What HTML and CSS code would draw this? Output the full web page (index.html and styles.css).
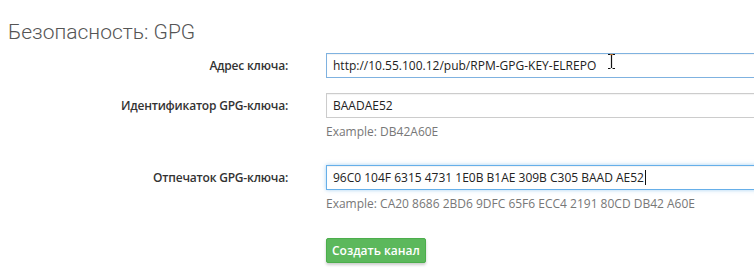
FILE: index.html
```html
<!DOCTYPE html>
<html lang="ru">
<head>
    <meta charset="UTF-8">
    <title>Безопасность: GPG</title>
    <link rel="stylesheet" href="styles.css">
</head>
<body>
    <h2 class="page-title">Безопасность: GPG</h2>

    <form class="gpg-form">
        <div class="form-row">
            <label class="form-label" for="key-url">Адрес ключа:</label>
            <div class="form-field">
                <input class="form-input is-active" id="key-url" type="text" value="http://10.55.100.12/pub/RPM-GPG-KEY-ELREPO">
            </div>
        </div>

        <div class="form-row">
            <label class="form-label" for="key-id">Идентификатор GPG-ключа:</label>
            <div class="form-field">
                <input class="form-input" id="key-id" type="text" value="BAADAE52">
                <span class="help-text">Example: DB42A60E</span>
            </div>
        </div>

        <div class="form-row">
            <label class="form-label" for="key-fp">Отпечаток GPG-ключа:</label>
            <div class="form-field">
                <div class="input-wrap">
                    <input class="form-input is-focused" id="key-fp" type="text" value="96C0 104F 6315 4731 1E0B B1AE 309B C305 BAAD AE52">
                    <span class="caret"></span>
                </div>
                <span class="help-text">Example: CA20 8686 2BD6 9DFC 65F6 ECC4 2191 80CD DB42 A60E</span>
            </div>
        </div>

        <div class="form-row">
            <span class="form-label"></span>
            <div class="form-field">
                <button class="btn-create" type="button">Создать канал</button>
            </div>
        </div>
    </form>

    <!-- курсор мыши -->
    <svg class="mouse-cursor" width="9" height="17" viewBox="0 0 9 17">
        <path d="M1 1.5h2.5M5.5 1.5H8M4.5 2v13M1 15.5h2.5M5.5 15.5H8" stroke="#111" stroke-width="1.2" fill="none"/>
        <path d="M3 1.5h3" stroke="#b06a2a" stroke-width="1.2"/>
    </svg>
</body>
</html>
```

FILE: styles.css
```css
body {
    margin: 0;
    background-color: white;
    font-family: "Open Sans", Arial, sans-serif;
    font-size: 12px;
    color: #333;
    overflow: hidden;
    position: relative;
    width: 754px;
    height: 278px;
}

.page-title {
    margin: 0;
    padding: 20px 0 0 8px;
    font-family: Roboto, Arial, sans-serif;
    font-weight: 300;
    font-size: 21px;
    line-height: 25px;
    color: #555;
}

.gpg-form {
    margin-top: 8px;
}

.form-row {
    display: grid;
    grid-template-columns: 288px 440px;
    column-gap: 38px;
    margin-bottom: 15px;
}

.form-label {
    text-align: right;
    font-weight: 600;
    letter-spacing: -0.2px;
    line-height: 25px;
    color: #333;
}

.form-field {
    display: flex;
    flex-direction: column;
}

.input-wrap {
    position: relative;
}

.form-input {
    box-sizing: border-box;
    width: 100%;
    height: 25px;
    padding: 0 6px;
    border: 1px solid #ccc;
    font-family: "Open Sans", Arial, sans-serif;
    font-size: 12px;
    color: #222;
    outline: none;
    box-shadow: inset 0 1px 1px rgba(0, 0, 0, 0.05);
}

.form-input.is-active {
    border-color: #7fb2e0;
}

.form-input.is-focused {
    border-color: #66afe9;
    box-shadow: inset 0 1px 1px rgba(0, 0, 0, 0.05), 0 0 4px rgba(102, 175, 233, 0.6);
}

.caret {
    position: absolute;
    left: 319px;
    top: 5px;
    width: 1px;
    height: 15px;
    background-color: #111;
}

.help-text {
    margin-top: 6px;
    line-height: 16px;
    color: #777;
}

.form-row:nth-child(2) {
    margin-bottom: 25px;
}

.form-row:nth-child(3) {
    margin-bottom: 26px;
}

.btn-create {
    align-self: flex-start;
    height: 25px;
    padding: 0 5px;
    background-color: #5cb85c;
    border: 1px solid #4cae4c;
    border-radius: 2px;
    color: white;
    font-family: "Open Sans", Arial, sans-serif;
    font-size: 12px;
    font-weight: 600;
    box-shadow: 0 2px 3px rgba(0, 0, 0, 0.2);
    cursor: pointer;
}

.mouse-cursor {
    position: absolute;
    left: 607px;
    top: 53px;
}
```
